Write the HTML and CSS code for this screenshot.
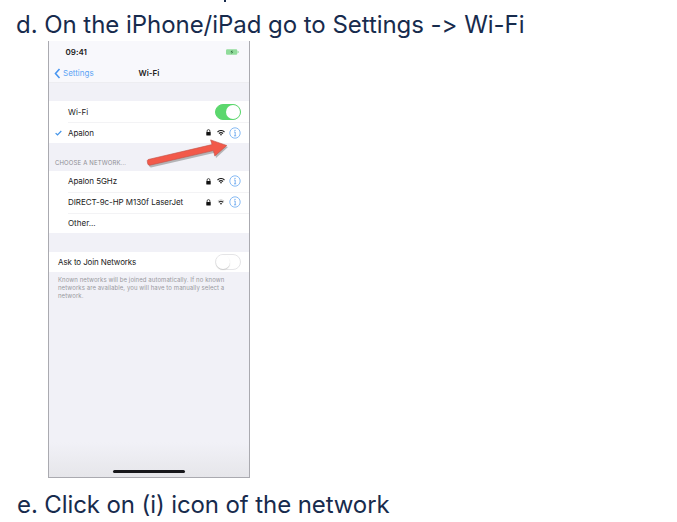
FILE: index.html
```html
<!DOCTYPE html>
<html lang="en">
<head>
<meta charset="utf-8">
<title>Wi-Fi settings guide</title>
<link rel="stylesheet" href="styles.css">
</head>
<body>
<svg width="0" height="0" class="defs">
  <symbol id="lock" viewBox="0 0 5 7"><path d="M1.1 3.2V2a1.4 1.4 0 0 1 2.8 0v1.2" fill="none" stroke="#222" stroke-width=".8"/><rect x=".3" y="2.9" width="4.4" height="3.6" rx=".5" fill="#111"/></symbol>
  <symbol id="wifi" viewBox="0 0 8 6"><g fill="none" stroke="#222" stroke-width="1.1"><path d="M.5 2Q4-1 7.5 2"/><path d="M1.9 3.5Q4 1.8 6.1 3.5"/></g><path d="M2.9 4.5Q4 3.7 5.1 4.5L4 5.8z" fill="#222"/></symbol>
  <symbol id="weak" viewBox="0 0 8 6"><path d="M.8 1.9Q4-.6 7.2 1.9" fill="none" stroke="#c8c8c8" stroke-width=".9"/><path d="M1.7 3.2Q4 1.5 6.3 3.2" fill="none" stroke="#333" stroke-width="1.2"/><path d="M2.8 4.4Q4 3.5 5.2 4.4L4 5.7z" fill="#222"/></symbol>
  <symbol id="info" viewBox="0 0 12 12"><circle cx="6" cy="6" r="5.2" fill="#fff" stroke="#79b2f2" stroke-width=".9"/><path d="M5.1 5H6.2V8.7M5 8.8H7.2" fill="none" stroke="#5c9eed" stroke-width=".8"/><circle cx="6" cy="3.3" r=".65" fill="#5c9eed"/></symbol>
</svg>
<main class="guide">
  <div class="previous"><svg width="8" height="3"><path d="M2 0V2" stroke="#172b4d" stroke-width="2"/></svg></div>
  <p class="step first">d. On the iPhone/iPad go to Settings -&gt; Wi-Fi</p>
  <section class="phone">
    <header class="top">
      <div class="status"><span>09:41</span><svg width="13" height="6" viewBox="0 0 13 6"><rect y=".3" width="11.3" height="5.4" rx="1.2" fill="#91dc9b"/><path d="M12.1 2v2" stroke="#91dc9b"/><path d="M6.4 1L4.4 3.2H6L5.2 5 7.4 2.7H6z" fill="#286638"/></svg></div>
      <nav class="nav"><svg width="7" height="11" viewBox="0 0 7 11"><path d="M5.5 1L1.5 5.5l4 4.5" fill="none" stroke="#4795f1" stroke-width="1.6"/></svg><span class="back">Settings</span><strong>Wi-Fi</strong></nav>
    </header>
    <div class="group current">
      <div class="row"><span class="name">Wi-Fi</span><span class="toggle on"></span></div>
      <div class="row"><svg class="check" width="7" height="6"><path d="M.6 3.1L2.5 4.8 6.3 1" fill="none" stroke="#4595e8" stroke-width="1.2"/></svg><span class="name apalon">Apalon</span><span class="icons"><svg class="lock"><use href="#lock"/></svg><svg class="wifi"><use href="#wifi"/></svg><svg class="info"><use href="#info"/></svg></span></div>
    </div>
    <div class="caption"><span>CHOOSE A NETWORK...</span></div>
    <div class="group networks">
      <div class="row"><span class="name apalon">Apalon 5GHz</span><span class="icons"><svg class="lock"><use href="#lock"/></svg><svg class="wifi"><use href="#wifi"/></svg><svg class="info"><use href="#info"/></svg></span></div>
      <div class="row"><span class="name direct">DIRECT-9c-HP M130f LaserJet</span><span class="icons"><svg class="lock"><use href="#lock"/></svg><svg class="wifi"><use href="#weak"/></svg><svg class="info"><use href="#info"/></svg></span></div>
      <div class="row"><span class="name">Other...</span></div>
    </div>
    <div class="ask"><span>Ask to Join Networks</span><span class="toggle"></span></div>
    <p class="note">Known networks will be joined automatically. If no known<br>networks are available, you will have to manually select a<br>network.</p>
    <div class="home"></div>
    <svg class="pointer" width="88" height="36" viewBox="0 0 88 36">
      <path d="M4 22.5L68 7 67 3 83 8 71 19 70 13.8 6 28.6Q3 28 4 22.5z" fill="#777" opacity=".5"/>
      <path d="M3.2 20.5Q2 21 2.3 22.8L2.8 25Q3.3 26.5 5 26.2L68.4 11.6 69.8 17 81.8 6.5 65.6 .9 67 5.6z" fill="#f2594a" stroke="#c05248" stroke-width=".6"/>
    </svg>
  </section>
  <p class="step last">e. Click on (i) icon of the network</p>
</main>
</body>
</html>
```
FILE: styles.css
```css
* { box-sizing: border-box; }
body { margin: 0; background: #fff; font-family: Inter, "Liberation Sans", sans-serif; font-feature-settings: "calt" 0; overflow: hidden; }
.defs { position: absolute; }
.guide { height: 522px; }
.previous { height: 3px; padding-left: 223px; }
.previous svg { display: block; }
.step { margin: 0; padding-left: 16px; color: #172b4d; font-size: 24px; line-height: 30px; letter-spacing: -.045px; white-space: nowrap; }
.first { height: 38px; padding-top: 7px; }
.last { padding: 12px 0 0 17px; letter-spacing: -.1px; }
.phone { position: relative; display: flex; flex-direction: column; width: 202px; height: 437px; margin-left: 48px; border: solid #aaaab0; border-width: 0 1px 1px; background: linear-gradient(#f1f1f7 0 92%, #e6e6ea); color: #222; font-size: 8px; white-space: nowrap; }
.top { height: 42px; background: #f8f8fc; border-bottom: 1px solid #ededf1; }
.status { display: flex; justify-content: space-between; align-items: center; height: 22px; padding: 0 10px 0 16.5px; font-weight: 600; }
.nav { display: flex; align-items: center; height: 20px; padding-left: 5px; }
.back { width: 75.5px; margin-left: 2px; color: #5da4f5; }
.nav strong { font-weight: 600; }
.group, .ask { background: #fff; }
.current { margin-top: 18px; }
.row { display: flex; align-items: center; position: relative; height: 21px; padding: 0 8px 0 19px; }
.row + .row { background: linear-gradient(#f3f3f5, #f3f3f5) 19px 0 / 182px 1px no-repeat; }
.apalon { letter-spacing: -.08px; }
.direct { letter-spacing: -.05px; }
.toggle { width: 26px; height: 16px; margin-left: auto; border: 1px solid #e5e5e7; border-radius: 8px; background: #fff; }
.toggle::before { content: ""; display: block; width: 14px; height: 14px; border-radius: 50%; background: #fff; box-shadow: 0 1px 1px #ccc; }
.toggle.on { border-color: #5bd76d; background: #5bd76d; }
.on::before { margin-left: auto; box-shadow: none; }
.check { position: absolute; left: 6px; top: 8px; }
.icons { display: flex; align-items: center; margin-left: auto; }
.lock { width: 5px; height: 7px; margin-right: 6px; }
.wifi { width: 8px; height: 6px; margin-right: 4px; }
.info { width: 12px; height: 12px; }
.caption { height: 28px; padding: 16px 0 0 6px; color: #8d8d94; font-size: 6px; line-height: 8px; letter-spacing: .14px; }
.networks { height: 62px; }
.networks .row { padding-bottom: 1px; }
.networks .row:last-child { height: 20px; padding-bottom: 0; }
.ask { display: flex; align-items: center; height: 20px; margin-top: 19px; padding: 0 8px 0 9px; letter-spacing: -.12px; }
.note { margin: 4px 0 0 9px; color: #9999a0; font-size: 6px; line-height: 8px; letter-spacing: .08px; }
.home { width: 72px; height: 3px; margin: auto auto 4px 64px; border-radius: 2px; background: #17171b; }
.pointer { position: absolute; left: 96px; top: 98px; }
```
